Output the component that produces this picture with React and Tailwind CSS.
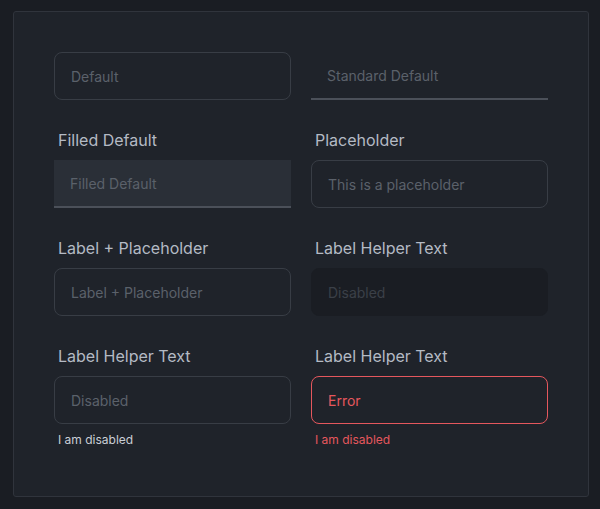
import React from "react";

const font = { fontFamily: "Inter, 'Noto Sans', sans-serif" };

function Label({ children }) {
  return (
    <div className="h-6 pl-1 text-base leading-6 text-[#b4bac4]">{children}</div>
  );
}

const base = "block w-full h-12 px-4 text-sm outline-none";
const ph = "placeholder:text-[#5b616a]";

export default function App() {
  return (
    <div className="min-h-[509px] w-[600px] bg-[#1a1d23] pt-[11px] pl-[13px]" style={font}>
      <div className="w-[576px] h-[486px] rounded-[3px] border border-[#30343c] bg-[#1f232a] p-10">
        <div className="grid grid-cols-2 gap-x-5 gap-y-7">
          <div>
            <input
              className={`${base} ${ph} rounded-lg border border-[#383d45] bg-transparent`}
              placeholder="Default"
            />
          </div>
          <div>
            <input
              className={`${base} ${ph} border-b-2 border-[#4b5059] bg-transparent`}
              placeholder="Standard Default"
            />
          </div>

          <div>
            <Label>Filled Default</Label>
            <input
              className={`${base} ${ph} mt-2 border-b-2 border-[#4b5059] bg-[#2a2f37]`}
              placeholder="Filled Default"
            />
          </div>
          <div>
            <Label>Placeholder</Label>
            <input
              className={`${base} ${ph} mt-2 rounded-lg border border-[#383d45] bg-transparent`}
              placeholder="This is a placeholder"
            />
          </div>

          <div>
            <Label>Label + Placeholder</Label>
            <input
              className={`${base} ${ph} mt-2 rounded-lg border border-[#383d45] bg-transparent`}
              placeholder="Label + Placeholder"
            />
          </div>
          <div>
            <Label>Label Helper Text</Label>
            <input
              disabled
              className={`${base} mt-2 rounded-lg border border-[#1a1d23] bg-[#1a1d23] placeholder:text-[#3b4048]`}
              placeholder="Disabled"
            />
          </div>

          <div>
            <Label>Label Helper Text</Label>
            <input
              className={`${base} ${ph} mt-2 rounded-lg border border-[#383d45] bg-transparent`}
              placeholder="Disabled"
            />
            <div className="mt-2 pl-1 text-xs leading-4 text-[#c9ced6]">I am disabled</div>
          </div>
          <div>
            <Label>Label Helper Text</Label>
            <input
              className={`${base} mt-2 rounded-lg border border-[#e5575d] bg-transparent text-[#e5575d] placeholder:text-[#e5575d]`}
              placeholder="Error"
            />
            <div className="mt-2 pl-1 text-xs leading-4 text-[#e5575d]">I am disabled</div>
          </div>
        </div>
      </div>
    </div>
  );
}
